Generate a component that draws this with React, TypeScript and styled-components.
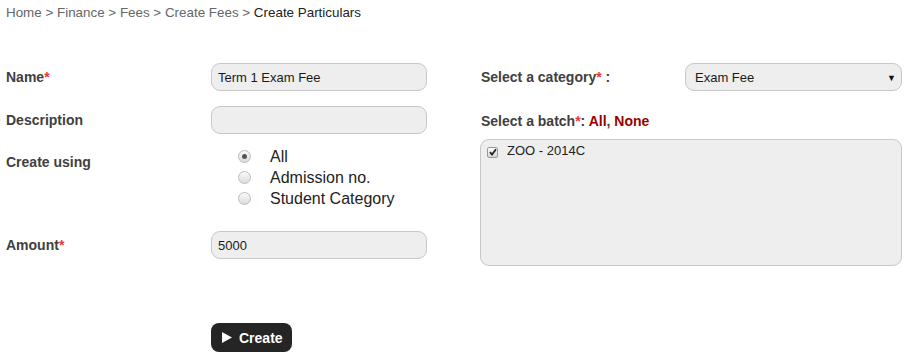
import React from 'react';
import styled, { createGlobalStyle } from 'styled-components';

const GlobalStyle = createGlobalStyle`
  body {
    margin: 0;
    background: #ffffff;
    font-family: 'Liberation Sans', Arial, sans-serif;
  }
`;

const Page = styled.div`
  width: 910px;
  height: 360px;
  padding: 5px 0 0 6px;
  box-sizing: border-box;
`;

const Breadcrumb = styled.div`
  font-size: 13.4px;
  line-height: 15px;
  color: #666;
`;

const Current = styled.span`
  color: #222;
`;

const Columns = styled.div`
  display: flex;
  gap: 54px;
  margin-top: 43px;
`;

const Section = styled.div`
  display: flex;
  flex-direction: column;
  width: 421px;
`;

const Row = styled.div<{ $top?: number }>`
  display: flex;
  align-items: center;
  margin-top: ${(p) => p.$top ?? 0}px;
`;

const Label = styled.div<{ $width?: number; $alignTop?: boolean }>`
  width: ${(p) => p.$width ?? 205}px;
  flex-shrink: 0;
  font-size: 14px;
  font-weight: bold;
  color: #404040;
  align-self: ${(p) => (p.$alignTop ? 'flex-start' : 'center')};
  padding-top: ${(p) => (p.$alignTop ? '8px' : '0')};
`;

const Star = styled.span`
  color: #e33;
`;

const Link = styled.span`
  color: #900;
`;

const Field = styled.div`
  width: 217px;
  height: 28px;
  box-sizing: border-box;
  border: 1px solid #c8c8c8;
  border-radius: 9px;
  background: #eeeeee;
  padding: 0 6px;
  display: flex;
  align-items: center;
  font-size: 13px;
  color: #1a1a1a;
  position: relative;
`;

const SelectField = styled(Field)`
  padding-left: 9px;
`;

const Arrow = styled.span`
  position: absolute;
  right: 5px;
  top: 9px;
  font-size: 9px;
  color: #111;
`;

const RadioGroup = styled.div`
  display: flex;
  flex-direction: column;
  padding-left: 27px;
`;

const RadioRow = styled.div`
  display: flex;
  align-items: center;
  height: 21px;
  font-size: 16px;
  color: #222;
`;

const Radio = styled.span<{ $checked?: boolean }>`
  width: 11px;
  height: 11px;
  border-radius: 50%;
  border: 1px solid #bcbcbc;
  background: linear-gradient(#fafafa, #dcdcdc);
  margin-right: 19px;
  display: flex;
  align-items: center;
  justify-content: center;
  &::after {
    content: '';
    width: 5px;
    height: 5px;
    border-radius: 50%;
    background: ${(p) => (p.$checked ? '#555' : 'transparent')};
  }
`;

const BatchBox = styled.div`
  margin-top: 10px;
  width: 422px;
  height: 127px;
  margin-left: -1px;
  box-sizing: border-box;
  border: 1px solid #c8c8c8;
  border-radius: 9px;
  background: #eeeeee;
  padding: 3px 6px;
`;

const BatchItem = styled.div`
  display: flex;
  align-items: center;
  font-size: 13px;
  color: #222;
  gap: 9px;
`;

const Check = styled.span`
  width: 9px;
  height: 9px;
  border: 1px solid #999;
  border-radius: 2px;
  background: linear-gradient(#fdfdfd, #d6d6d6);
  display: flex;
  align-items: center;
  justify-content: center;
  margin-top: 3px;
`;

const Button = styled.button`
  margin-top: 64px;
  margin-left: 205px;
  width: 81px;
  height: 29px;
  border: none;
  border-radius: 8px;
  background: #252525;
  color: #fff;
  font-family: 'Liberation Sans', Arial, sans-serif;
  font-size: 14px;
  font-weight: bold;
  display: flex;
  align-items: center;
  gap: 7px;
  padding: 0 0 0 11px;
  align-self: flex-start;
`;

const App: React.FC = () => {
  return (
    <Page>
      <GlobalStyle />
      <Breadcrumb>
        Home &gt; Finance &gt; Fees &gt; Create Fees &gt; <Current>Create Particulars</Current>
      </Breadcrumb>
      <Columns>
        <Section>
          <Row>
            <Label>
              Name<Star>*</Star>
            </Label>
            <Field>Term 1 Exam Fee</Field>
          </Row>
          <Row $top={15}>
            <Label>Description</Label>
            <Field />
          </Row>
          <Row $top={12}>
            <Label $alignTop>Create using</Label>
            <RadioGroup>
              <RadioRow>
                <Radio $checked />
                All
              </RadioRow>
              <RadioRow>
                <Radio />
                Admission no.
              </RadioRow>
              <RadioRow>
                <Radio />
                Student Category
              </RadioRow>
            </RadioGroup>
          </Row>
          <Row $top={22}>
            <Label>
              Amount<Star>*</Star>
            </Label>
            <Field>5000</Field>
          </Row>
          <Button>
            <svg width="10" height="11" viewBox="0 0 10 11">
              <path d="M0 0 L10 5.5 L0 11 Z" fill="#fff" />
            </svg>
            Create
          </Button>
        </Section>
        <Section>
          <Row>
            <Label $width={204}>
              Select a category<Star>*</Star> :
            </Label>
            <SelectField>
              Exam Fee
              <Arrow>▼</Arrow>
            </SelectField>
          </Row>
          <Row $top={22}>
            <Label $width={400}>
              Select a batch<Star>*</Star>: <Link>All</Link>, <Link>None</Link>
            </Label>
          </Row>
          <BatchBox>
            <BatchItem>
              <Check>
                <svg width="8" height="8" viewBox="0 0 8 8">
                  <path d="M1 4.2 L3 6.5 L7 1.2" stroke="#222" strokeWidth="1.8" fill="none" />
                </svg>
              </Check>
              ZOO - 2014C
            </BatchItem>
          </BatchBox>
        </Section>
      </Columns>
    </Page>
  );
};

export default App;
